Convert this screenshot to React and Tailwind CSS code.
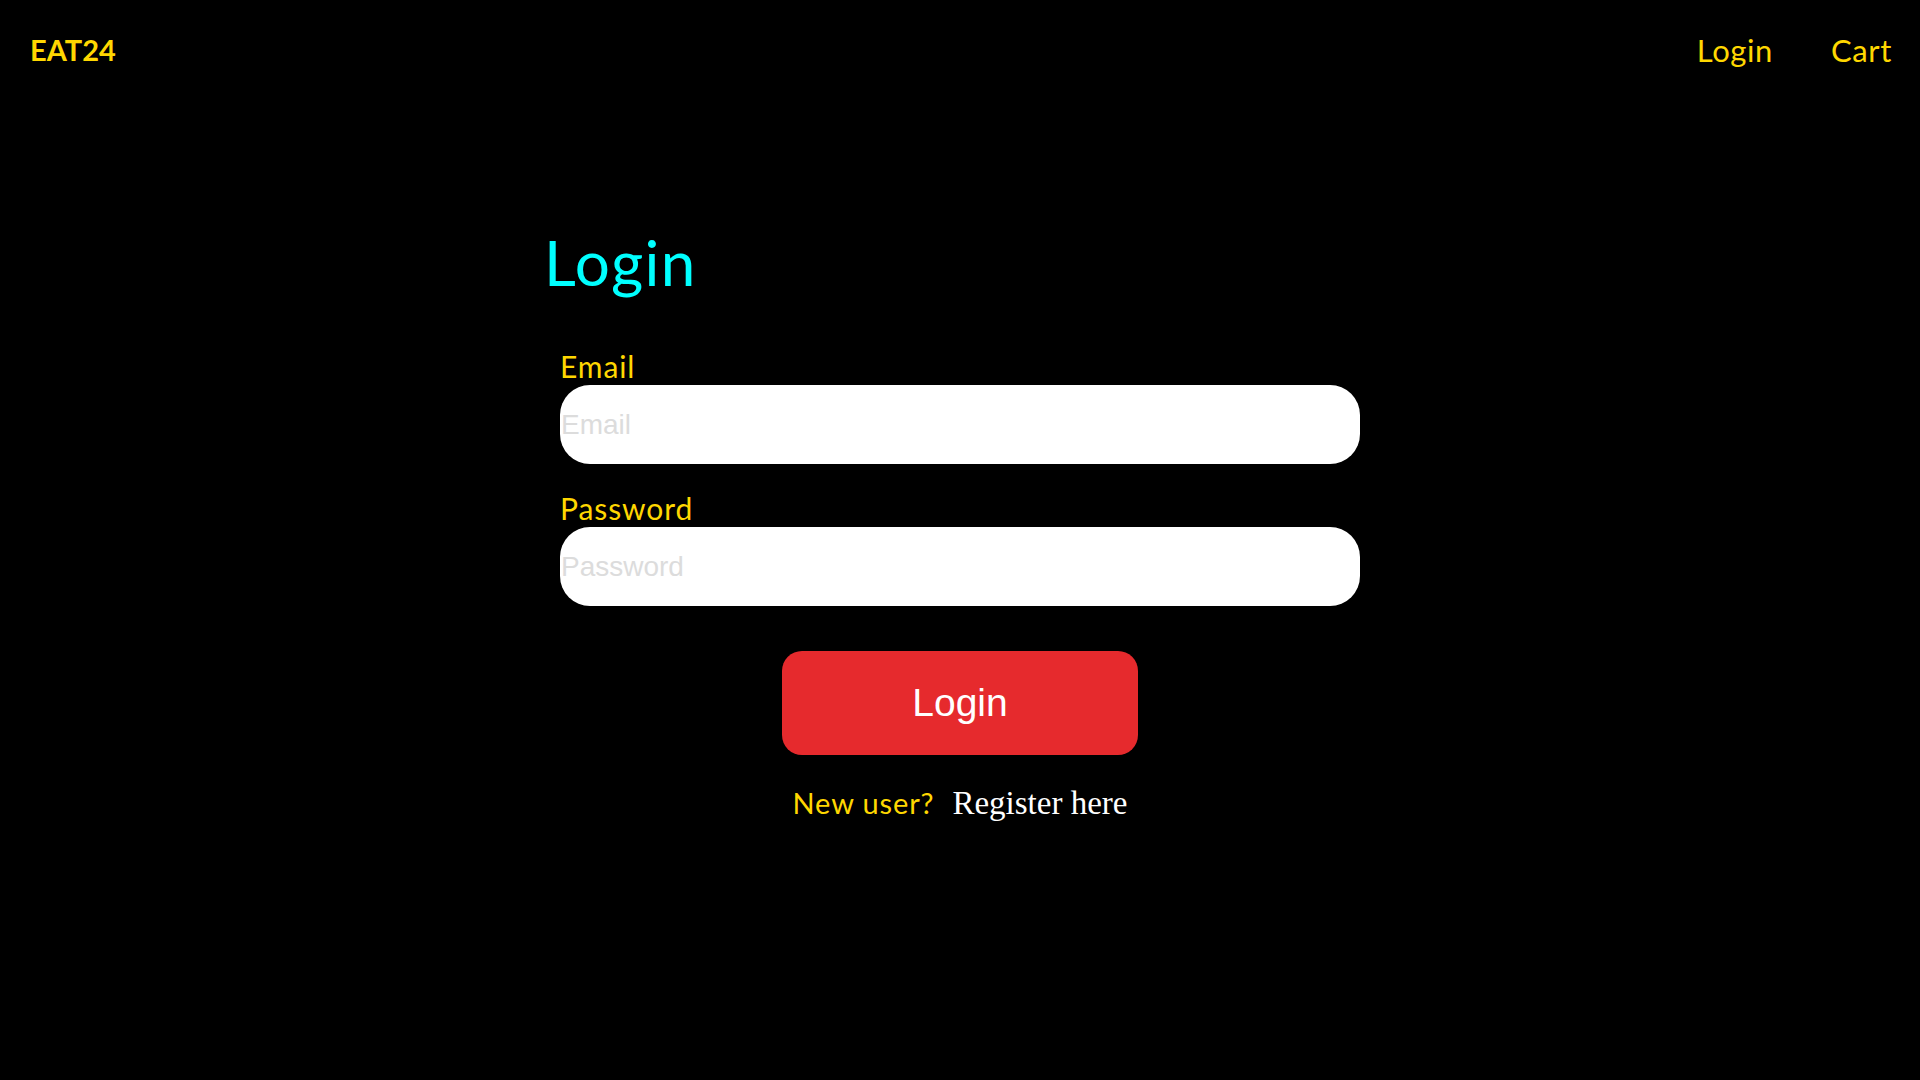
const Field = ({ label, type, first }) => (
  <div className={first ? "flex flex-col" : "mt-[30px] flex flex-col"}>
    <label className="mb-[5px] text-[30px] leading-[28px] tracking-[0.03em] text-[#ffd700]">
      {label}
    </label>
    <input
      type={type}
      placeholder={label}
      className="h-[79px] w-[800px] rounded-[30px] bg-white px-[1px] font-['Liberation_Sans',Arial,sans-serif] text-[28px] text-black outline-none placeholder:text-[#dcdcdc]"
    />
  </div>
);

export default function App() {
  return (
    <div className="min-h-screen bg-black font-['Lato','Noto_Sans',sans-serif]">
      <nav className="flex h-[100px] items-center justify-between pl-[30px] pr-[28px]">
        <div className="text-[29px] font-bold text-[#ffd700]">EAT24</div>
        <div className="flex items-center gap-[58px] text-[31px] tracking-[0.02em] text-[#ffd700]">
          <a href="#">Login</a>
          <a href="#">Cart</a>
        </div>
      </nav>

      <main className="mx-auto flex w-[800px] flex-col pt-[132px]">
        <h1 className="-ml-[16px] text-[62px] leading-[60px] tracking-[0.02em] text-[#00ffff]">
          Login
        </h1>
        <form className="mt-[60px] flex flex-col">
          <Field label="Email" type="email" first />
          <Field label="Password" type="password" />
          <button
            type="button"
            className="mx-auto mt-[45px] h-[104px] w-[356px] rounded-[20px] bg-[#e62a2d] font-['Liberation_Sans',Arial,sans-serif] text-[39px] text-white"
          >
            Login
          </button>
          <div className="mt-[32px] flex items-baseline justify-center gap-[18px] leading-[32px]">
            <span className="text-[29px] tracking-[0.03em] text-[#ffd700]">New user?</span>
            <a
              href="#"
              className="font-['Liberation_Serif','Times_New_Roman',serif] text-[33px] text-white"
            >
              Register here
            </a>
          </div>
        </form>
      </main>
    </div>
  );
}
